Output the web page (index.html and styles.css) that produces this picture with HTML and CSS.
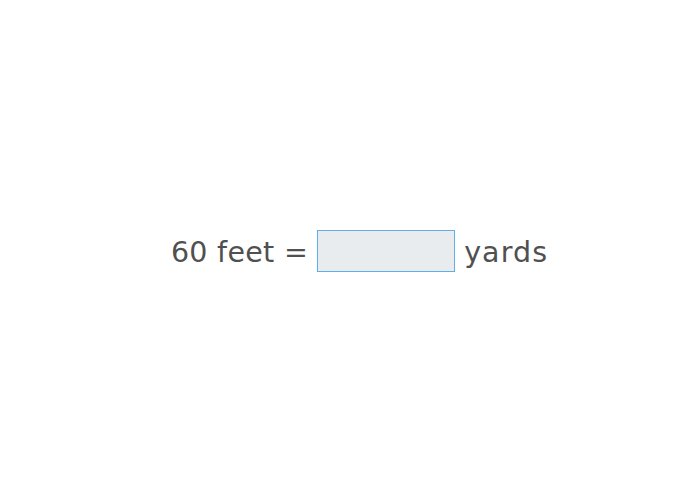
FILE: index.html
```html
<!DOCTYPE html>
<html>
<head>
<meta charset="utf-8">
<link rel="stylesheet" href="styles.css">
</head>
<body>
<main class="stage">
  <div class="question">
    <span class="label label-lead">60 feet =</span>
    <input class="answer" type="text" aria-label="answer">
    <span class="label label-unit">yards</span>
  </div>
</main>
</body>
</html>
```
FILE: styles.css
```css
html, body {
  margin: 0;
  padding: 0;
  background: #ffffff;
}
.stage {
  width: 700px;
  height: 500px;
  display: flex;
  align-items: center;
  justify-content: center;
  padding-left: 19px;
  padding-top: 2px;
  box-sizing: border-box;
}
.question {
  display: flex;
  align-items: center;
  gap: 9px;
  font-family: "DejaVu Sans", Verdana, sans-serif;
  font-size: 28.5px;
  color: #505050;
}
.label {
  padding-top: 2px;
}
.label-lead {
  letter-spacing: 0.3px;
}
.label-unit {
  letter-spacing: 1.1px;
}
.answer {
  width: 138px;
  height: 42px;
  box-sizing: border-box;
  border: 1px solid #5fb0e8;
  background: #e8ecee;
  margin: 0;
  padding: 0 6px;
  font: inherit;
  outline: none;
}
```
